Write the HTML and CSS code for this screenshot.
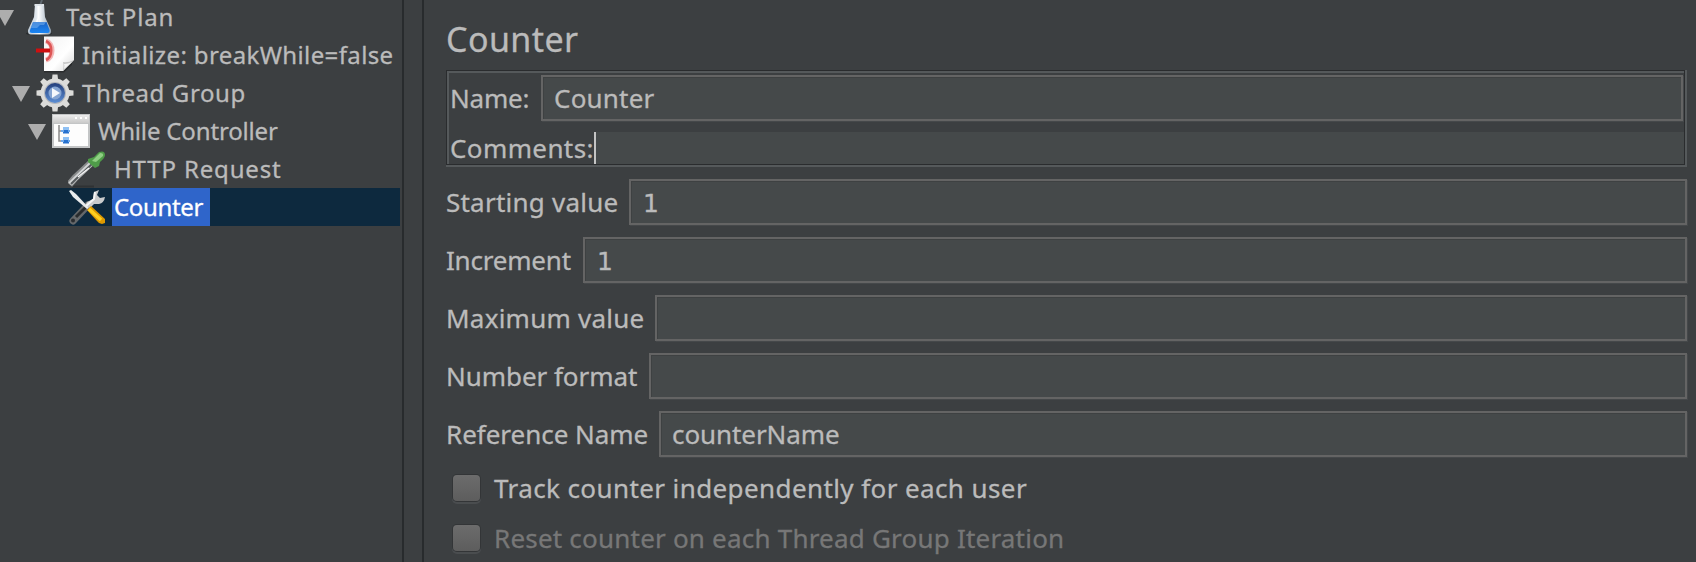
FILE: index.html
```html
<!DOCTYPE html>
<html lang="en">
<head>
<meta charset="utf-8">
<title>Counter</title>
<link rel="stylesheet" href="styles.css">
</head>
<body>
<div class="app">
  <nav class="tree">
    <div class="row level-0">
      <svg class="arrow" viewBox="0 0 18 16"><path d="M0 0H18L9 16Z"/></svg>
      <svg class="icon" viewBox="0 0 38 38">
        <defs>
          <linearGradient id="glass"><stop offset="0" stop-color="#b9c6d2"/><stop offset=".5" stop-color="#f4f7fa"/><stop offset="1" stop-color="#8c9cab"/></linearGradient>
          <linearGradient id="liquid" x2="0" y2="1"><stop offset="0" stop-color="#1b62c4"/><stop offset="1" stop-color="#1a86f4"/></linearGradient>
        </defs>
        <ellipse cx="19" cy="35.500" rx="13" ry="1.800" fill="#25282a"/>
        <path d="M15 6H24L25 19L31 32Q31.500 36.500 28 36.500H11Q7.500 36.500 8 32L14 19Z" fill="url(#glass)"/>
        <path d="M17.500 7V20L12 32H15L19 20V7Z" fill="#fff" opacity=".8"/>
        <path d="M13 24H26.500L29.500 32Q30 35 27.500 35H12Q9 35 10 32Z" fill="url(#liquid)"/>
        <path d="M13 24H26L24 27H20L17 30H11Z" fill="#75b3f2" opacity=".55"/>
        <path d="M14.500 6H24V8H14.500Z" fill="#dfe5ea"/>
        <path d="M20.500 6L22 2" stroke="#5e6870" stroke-width="2"/>
      </svg>
      <span class="label l-plan">Test Plan</span>
    </div>
    <div class="row level-1">
      <span class="arrow"></span>
      <svg class="icon" viewBox="0 0 38 38">
        <defs><linearGradient id="page" x2="1" y2="1"><stop offset="0" stop-color="#f2f2f2"/><stop offset=".6" stop-color="#fff"/><stop offset="1" stop-color="#d6d6d6"/></linearGradient></defs>
        <path d="M8 35H27L36 26V29L28 36.500H8Z" fill="#2b2d2e"/>
        <path d="M8 0.500H38V24L27 35H8Z" fill="url(#page)"/>
        <path d="M27 35Q28 29 27 26Q32 27 38 24Z" fill="#c5c5c5"/>
        <path d="M28 33Q29 30 28 28Q32 28 36 26Z" fill="#f4f4f4"/>
        <path d="M10 5C18 7 18 22 10 24" fill="none" stroke="#f3b5b5" stroke-width="5"/>
        <path d="M10 5C17 8 17 21 10 24" fill="none" stroke="#dd5555" stroke-width="2.500"/>
        <path d="M0 14.500H14" stroke="#cf1010" stroke-width="4"/>
      </svg>
      <span class="label l-init">Initialize: breakWhile=false</span>
    </div>
    <div class="row level-1">
      <svg class="arrow" viewBox="0 0 18 16"><path d="M0 0H18L9 16Z"/></svg>
      <svg class="icon" viewBox="0 0 38 38">
        <defs><linearGradient id="lens" x2="0" y2="1"><stop offset="0" stop-color="#243f7c"/><stop offset="1" stop-color="#5d8fd4"/></linearGradient></defs>
        <g fill="#dcdcda">
          <circle cx="19" cy="19" r="14.500"/>
          <path d="M16 5L16.500 0.500H21.500L22 5V33L21.500 37.500H16.500L16 33ZM5 16L0.500 16.500V21.500L5 22H33L37.500 21.500V16.500L33 16Z"/>
          <path transform="rotate(45 19 19)" d="M16 5L16.500 0.500H21.500L22 5V33L21.500 37.500H16.500L16 33ZM5 16L0.500 16.500V21.500L5 22H33L37.500 21.500V16.500L33 16Z"/>
        </g>
        <circle cx="19" cy="19" r="11" fill="#b4b7bc"/>
        <circle cx="19" cy="19" r="10" fill="url(#lens)"/>
        <circle cx="19" cy="19" r="6.500" fill="#86a5d2"/>
        <path d="M16 14L24 19L16 24Z" fill="#f5f8fc"/>
      </svg>
      <span class="label l-thread">Thread Group</span>
    </div>
    <div class="row level-2">
      <svg class="arrow" viewBox="0 0 18 16"><path d="M0 0H18L9 16Z"/></svg>
      <svg class="icon" viewBox="0 0 38 38">
        <defs><linearGradient id="bar" x2="0" y2="1"><stop offset="0" stop-color="#ececec"/><stop offset="1" stop-color="#c9c9c9"/></linearGradient></defs>
        <path d="M0 2H38V36H0Z" fill="#c3c5c6"/>
        <path d="M1 3H37V11H1Z" fill="url(#bar)"/>
        <path d="M2 12H36V34H2Z" fill="#fdfdfd"/>
        <path d="M23 6H25M28 6H30M33 6H35" stroke="#fff" stroke-width="2"/>
        <path d="M7 13V29H11M7 19H11" fill="none" stroke="#8b8b8b" stroke-width="1.500"/>
        <path d="M11 15.500H17V21.500H11ZM11 25.500H17V31.500H11Z" fill="#2671cf"/>
        <path d="M11 15H17V18H11ZM11 25H17V28H11Z" fill="#8ec0f4"/>
        <path d="M9 18H12V20H9ZM9 28H12V30H9ZM16 18H18V20H16ZM16 28H18V30H16Z" fill="#6ea8ea"/>
      </svg>
      <span class="label l-while">While Controller</span>
    </div>
    <div class="row level-3">
      <span class="arrow"></span>
      <svg class="icon" viewBox="0 0 38 38">
        <path d="M4 36.500H26" stroke="#2f3234" stroke-width="2"/>
        <path d="M24.500 11.500L7 28L1.500 34.500" fill="none" stroke="#8b8d8e" stroke-width="7"/>
        <path d="M25 12L8 28L2 34" fill="none" stroke="#d2d4d5" stroke-width="4.500"/>
        <path d="M25 13L8 29L3 34" fill="none" stroke="#55595b" stroke-width="2"/>
        <path d="M21 18L10 27" stroke="#f6f6f6" stroke-width="1.500"/>
        <path d="M20 9L26 7L31 2Q37 0 37 5Q37 8 32 12L31 16L27 18L20 12Z" fill="#4f9c49"/>
        <path d="M24 11L32 3Q36 3 35 6L28 12Z" fill="#8fcf83"/>
      </svg>
      <span class="label l-http">HTTP Request</span>
    </div>
    <div class="row level-3 selected">
      <span class="arrow"></span>
      <svg class="icon" viewBox="0 0 38 38">
        <path d="M5 33L20 17" stroke="#65686a" stroke-width="7" stroke-linecap="round"/>
        <path d="M8 29L19 18" stroke="#292c2e" stroke-width="3"/>
        <circle cx="5" cy="32.500" r="2" fill="#2a2d30"/>
        <path d="M19 14L25 11L26 4L31 2L29 7L32 10L37 9Q36 15 31 16L26 16L22 20L17 18Z" fill="#c9cbcc"/>
        <path d="M18 18L26 11L27 4" fill="none" stroke="#f6f6f6" stroke-width="2"/>
        <path d="M1 3L3 2L8 6L21 20L19 21L5 9Z" fill="#e9ebec"/>
        <path d="M19 22L23 18L37 31V35L34 36Q31 36 29 33Z" fill="#dc9800"/>
        <path d="M21 21L33 32" stroke="#ffd020" stroke-width="3.500"/>
      </svg>
      <span class="label l-counter">Counter</span>
    </div>
  </nav>
  <div class="divider"></div>
  <main class="panel">
    <h1 class="title">Counter</h1>
    <section class="group">
      <div class="group-body">
        <div class="line name-line"><label class="t-name">Name:</label><div class="field"><span class="t-value">Counter</span></div></div>
        <div class="line comments-line"><label class="t-comments">Comments:</label><div class="comments-field"></div></div>
      </div>
    </section>
    <div class="form">
      <div class="line"><label class="t-start">Starting value</label><div class="field"><span class="digit">1</span></div></div>
      <div class="line"><label class="t-inc">Increment</label><div class="field"><span class="digit">1</span></div></div>
      <div class="line"><label class="t-max">Maximum value</label><div class="field"></div></div>
      <div class="line"><label class="t-format">Number format</label><div class="field"></div></div>
      <div class="line"><label class="t-ref">Reference Name</label><div class="field"><span class="t-refvalue">counterName</span></div></div>
    </div>
    <div class="checks">
      <div class="check"><span class="box"></span><span class="t-track">Track counter independently for each user</span></div>
      <div class="check disabled"><span class="box"></span><span class="t-reset">Reset counter on each Thread Group Iteration</span></div>
    </div>
  </main>
</div>
</body>
</html>
```
FILE: styles.css
```css
* { box-sizing: border-box; }
body {
  margin: 0;
  background: #3c3f41;
  color: #bbb;
  font: 26px "Noto Sans", sans-serif;
  -webkit-text-stroke: .3px;
  overflow: hidden;
}
.app { display: flex; height: 562px; }

/* tree */
.tree { width: 402px; padding-right: 2px; margin-top: -2px; font-size: 24px; flex: none; }
.row { display: flex; align-items: center; height: 38px; line-height: 38px; white-space: nowrap; }
.level-0 .arrow { margin-left: -4px; }
.level-1 { padding-left: 12px; }
.level-2 { padding-left: 28px; }
.level-3 { padding-left: 44px; }
.arrow { width: 18px; height: 16px; margin-right: 6px; flex: none; fill: #adadad; }
svg.arrow { margin-top: 2px; }
.icon { width: 38px; height: 38px; margin-right: 6px; flex: none; }
.level-3 .arrow { margin-right: 4px; }
.level-3 .icon { margin-left: 2px; }
.label { height: 38px; padding-left: 2px; }
.selected { background: #0d293e; }
.selected .label { background: #2f65ca; color: #fff; width: 98px; }
.l-plan { letter-spacing: .84px; }
.l-init { letter-spacing: .37px; }
.l-thread { letter-spacing: .6px; }
.l-while { letter-spacing: -.16px; }
.l-http { letter-spacing: .84px; }
.l-counter { letter-spacing: -.33px; }

.divider { width: 22px; flex: none; border: solid #282b2d; border-width: 0 2px; }

/* editor panel */
.panel { flex: 1; padding: 0 9px 0 22px; }
.title { margin: 0; height: 70px; padding-top: 9px; font-size: 34px; font-weight: 400; line-height: 60px; letter-spacing: .41px; }
.group {
  height: 97px;
  border: solid #55595b;
  border-width: 0 2px 2px 0;
}
.group-body {
  height: 95px;
  border: 1px solid #2a2c2e;
  box-shadow: inset 2px 2px #55595b;
  padding: 4px 0 0 4px;
}
.line { display: flex; height: 46px; line-height: 46px; white-space: nowrap; }
.line label { flex: none; }
.field {
  flex: 1;
  border: 2px solid #646464;
  background: #45494a;
  box-shadow: inset 1px 1px #3e4142, 1px 1px #45484a;
  padding-left: 11px;
  line-height: 42px;
}
.comments-line { height: 32px; line-height: 32px; margin-top: 11px; }
.comments-field { flex: 1; background: #45494a; border-left: 2px solid #c4c4c4; }
.form { display: grid; gap: 12px; margin-top: 12px; }
.t-name { width: 91px; margin-left: -1px; letter-spacing: -.21px; }
.name-line { padding-right: 1px; }
.t-value { letter-spacing: .2px; }
.t-comments { width: 144px; letter-spacing: .39px; margin-left: -1px; }
.t-start { width: 183px; letter-spacing: .23px; }
.t-inc { width: 137px; letter-spacing: -.2px; }
.t-max { width: 209px; letter-spacing: .24px; }
.t-format { width: 203px; letter-spacing: -.05px; }
.t-ref { width: 213px; letter-spacing: -.03px; }
.t-refvalue { letter-spacing: -.08px; }
.digit { font-family: "DejaVu Sans", sans-serif; font-size: 25px; padding-left: 1px; }

/* checkboxes */
.checks { display: grid; gap: 12px; margin-top: 12px; }
.check { display: flex; align-items: center; height: 38px; line-height: 38px; padding-left: 7px; white-space: nowrap; }
.box {
  width: 27px;
  height: 26px;
  margin-right: 14px;
  border-radius: 4px;
  background: linear-gradient(#6c6c6c, #5d5d5d);
  box-shadow: 0 0 0 1px #333537, 0 2px 0 1px #4a4d4f;
}
.disabled { color: #777; }
.t-track { letter-spacing: .4px; }
.t-reset { letter-spacing: .21px; }
```
